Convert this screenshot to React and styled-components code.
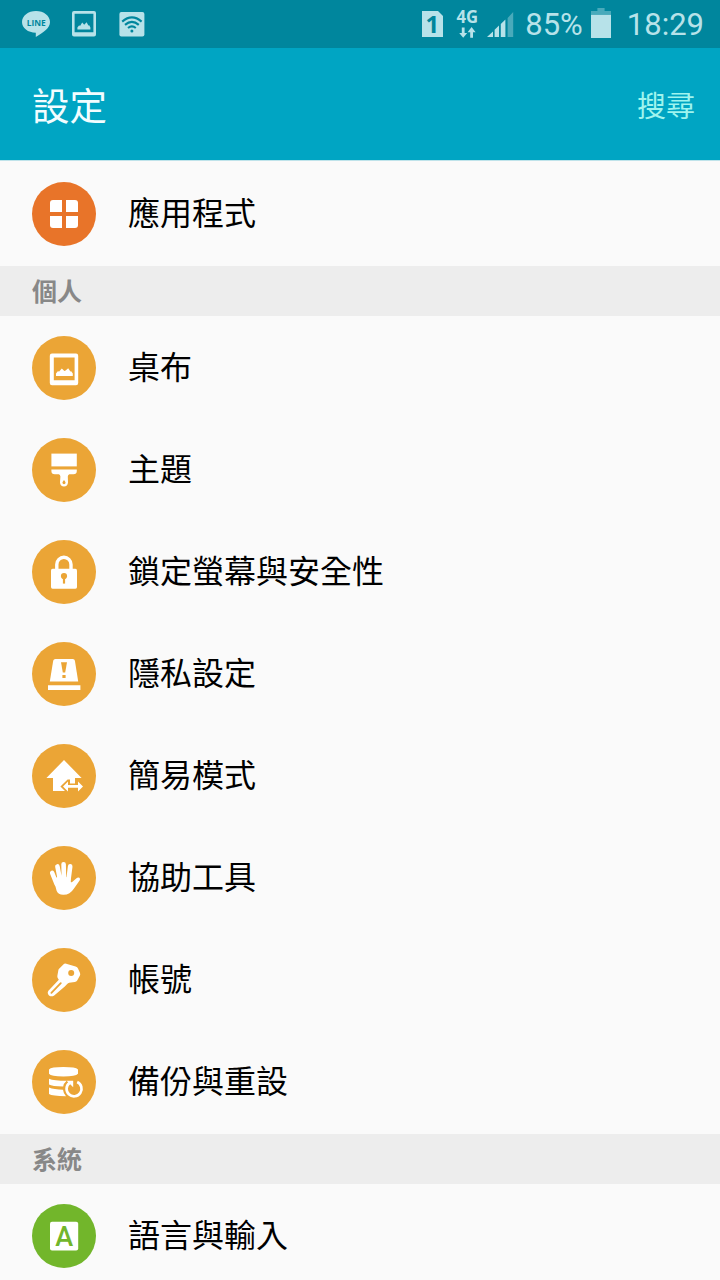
import styled, { createGlobalStyle } from "styled-components";

const TINT = "#b7e2e9";
const BAR = "#00869d";
const AMBER = "#eba536";

const AppsIcon = () => (
  <svg width="64" height="64" viewBox="0 0 64 64" fill="#fff">
    <path d="M21 18H30V30H18V21Q18 18 21 18Z" />
    <path d="M34 18H43Q46 18 46 21V30H34Z" />
    <path d="M18 34H30V46H21Q18 46 18 43Z" />
    <path d="M34 34H46V43Q46 46 43 46H34Z" />
  </svg>
);

const WallpaperIcon = () => (
  <svg width="64" height="64" viewBox="0 0 64 64" fill="#fff">
    <path
      fillRule="evenodd"
      d="M20 17.6H44Q46.2 17.6 46.2 19.8V47Q46.2 49.2 44 49.2H20Q17.8 49.2 17.8 47V19.8Q17.8 17.6 20 17.6ZM21.8 21.4V44.2H42.6V21.4Z"
    />
    <path d="M24 40V37.4L25.8 35.2L27.2 35.6L29.8 32.4L32.4 35L33.6 34.6L36.2 32.2L38.4 35.4L39.2 35.2L40.8 37.6V40Z" />
  </svg>
);

const ThemeIcon = () => (
  <svg width="64" height="64" viewBox="0 0 64 64" fill="#fff">
    <path d="M19.4 15.6H44.8V28.4H19.4Z" />
    <path
      fillRule="evenodd"
      d="M19.4 31.6H44.8V33Q44.8 36.2 41.4 36.2H37.4Q36 36.6 35.8 38.4L36 44.6Q35.6 48.6 32 48.6Q28.4 48.6 28 44.6L28.4 38.4Q28.2 36.6 26.8 36.2H22.8Q19.4 36.2 19.4 33ZM32 42Q30.6 43.4 30.4 44.8Q30.6 46.2 32 46.2Q33.4 46.2 33.6 44.8Q33.4 43.4 32 42Z"
    />
  </svg>
);

const LockIcon = () => (
  <svg width="64" height="64" viewBox="0 0 64 64" fill="#fff">
    <path d="M24.8 30V24.4A7.1 7.1 0 0 1 39 24.4V30" fill="none" stroke="#fff" strokeWidth="3.4" />
    <rect x="19" y="28.8" width="26" height="19.9" rx="1.6" />
    <circle cx="32" cy="36" r="3.1" fill={AMBER} />
    <path d="M30.9 37H33.1V43.6H30.9Z" fill={AMBER} />
  </svg>
);

const PrivacyIcon = () => (
  <svg width="64" height="64" viewBox="0 0 64 64" fill="#fff">
    <path d="M23.4 17H40.8Q42.6 17 42.9 18.8L46.2 39.4H17.8L21.2 18.8Q21.6 17 23.4 17Z" />
    <path d="M16 43.2H48.4V48H16Z" />
    <path d="M29 20.2H35L33.2 30.4H30.8Z" fill={AMBER} />
    <rect x="30.4" y="33" width="3.2" height="3" fill={AMBER} />
  </svg>
);

const EasyModeIcon = () => (
  <svg width="64" height="64" viewBox="0 0 64 64" fill="#fff">
    <path d="M32 16L49.6 34H43V39.6H38V35.4H35.6L28.4 42.4L33 47H21V34H14.4Z" />
    <path d="M31 42.4L36 37.4V41.1H46V37.4L51 42.4L46 47.4V43.7H36V47.4Z" />
  </svg>
);

const HandIcon = () => (
  <svg width="64" height="64" viewBox="0 0 64 64" fill="#fff">
    <path
      d="M20.2 27L24.6 38M25.4 20.4L28.4 36M31.6 18.2L32 36M38.2 20.4L36.2 36"
      stroke="#fff"
      strokeWidth="4.6"
      strokeLinecap="round"
    />
    <path d="M22 33L26.2 30.6L38.4 31.4L38.6 36Q39.6 36.8 40.8 35.6L44.2 32.4Q46 31 47.4 31.8Q48.6 32.8 47.6 34.6L42 42.4Q38 48.6 31.6 48.8Q26.2 49 24.6 44.8Q23 39.8 22 33Z" />
  </svg>
);

const KeyIcon = () => (
  <svg width="64" height="64" viewBox="0 0 64 64" fill="#fff">
    <path d="M31.6 16.2Q32.6 15.2 34.2 15.7L43.6 18.4Q45.4 19 46 20.6L48 25Q48.6 26.4 47.8 27.8L45.2 32.4Q44.4 33.8 42.8 34L37.2 34.8Q36 35 35.2 36L32.8 38.6L22.2 47.4Q19.6 49.2 17 47.4Q14.8 45.2 16.4 42.8L26.8 31.8L25.6 29.8Q25.2 28.8 25.4 27.6L26.4 22Q26.6 21 27.6 20.2Z" />
    <path d="M28.8 35.2L19.4 44.8" stroke={AMBER} strokeWidth="1.8" strokeLinecap="round" />
    <circle cx="39.2" cy="25" r="3" fill={AMBER} />
  </svg>
);

const BackupIcon = () => (
  <svg width="64" height="64" viewBox="0 0 64 64" fill="#fff">
    <path d="M17 19.4Q19 17 31.4 17T46 19.4V23.8Q43.8 26.4 31.4 26.4T17 23.8Z" />
    <path d="M17 28.8Q22 30.8 34.6 30.8Q31.4 33.6 31.2 36.6Q20 36.4 17 34.6Z" />
    <path d="M17 37.6Q22 39.6 31 39.8Q31.4 43.6 34 46.2Q20 46 17 44Z" />
    <path d="M45.2 32A7.5 7.5 0 1 1 37.6 32.8" fill="none" stroke="#fff" strokeWidth="2.7" />
    <path d="M34.6 30.8H41.2V37.2Z" />
  </svg>
);

const LanguageIcon = () => (
  <svg width="64" height="64" viewBox="0 0 64 64">
    <rect x="18" y="17.8" width="28.2" height="28.8" rx="2" fill="#fff" />
    <text x="32.1" y="41.7" fontSize="27" fontWeight="500" fontFamily="Roboto, sans-serif" textAnchor="middle" fill="#72b62b">
      A
    </text>
  </svg>
);

const LineIcon = () => (
  <svg width="28" height="27" viewBox="0 0 28 27">
    <path d="M14 0C21.8 0 28 4.8 28 11C28 17 21.6 21.4 13.8 26V21.8C6 21.6 0 17 0 11C0 4.8 6.2 0 14 0Z" fill={TINT} />
    <text x="14.2" y="15" fontSize="9.4" fontWeight="700" fontFamily="Open Sans, sans-serif" textAnchor="middle" textLength="19" lengthAdjust="spacingAndGlyphs" fill={BAR}>
      LINE
    </text>
  </svg>
);

const PictureIcon = () => (
  <svg width="24" height="26" viewBox="0 0 24 26" fill={TINT}>
    <path fillRule="evenodd" d="M2 0H22Q24 0 24 2V23.4Q24 25.4 22 25.4H2Q0 25.4 0 23.4V2Q0 0 2 0ZM2.6 2.8V21.2H21.4V2.8Z" />
    <path d="M5.4 18.4V16.4L7 14.4L8.2 14.8L10.2 11.4L12.2 13.8L14.6 11.2L16.4 14.4L17.2 14.2L18.4 16.4V18.4Z" />
  </svg>
);

const WifiIcon = () => (
  <svg width="26" height="25" viewBox="0 0 26 25" fill="none" stroke={BAR} strokeWidth="2.1">
    <rect x="0.4" width="25" height="24.6" rx="2" fill={TINT} stroke="none" />
    <path d="M3.2 9.6Q12.9 1.2 22.6 9.6M6 12.9Q12.9 6.9 19.8 12.9M9 16Q12.9 12.8 16.8 16" />
    <circle cx="12.9" cy="18.9" r="1.5" fill={BAR} stroke="none" />
  </svg>
);

const SimIcon = () => (
  <svg width="21" height="36" viewBox="0 0 21 36">
    <path d="M0 5H16L21 10V31H0Z" fill={TINT} />
    <text x="10.4" y="27" fontSize="24" fontWeight="700" fontFamily="Open Sans, sans-serif" textAnchor="middle" fill={BAR}>
      1
    </text>
  </svg>
);

const NetworkIcon = () => (
  <svg width="24" height="36" viewBox="0 0 24 36" fill={TINT}>
    <text x="0.6" y="20.4" fontSize="17" fontWeight="700" fontFamily="Open Sans, sans-serif" textLength="21.6" lengthAdjust="spacingAndGlyphs">
      4G
    </text>
    <path d="M5.8 24.4H8.6V30H11.2L7.2 34.8L3.2 30H5.8Z" />
    <path d="M14.2 34.8H17V29.2H19.6L15.6 24L11.6 29.2H14.2Z" />
  </svg>
);

const SignalIcon = () => (
  <svg width="27" height="26" viewBox="0 0 27 26" fill={TINT}>
    <path d="M0 25L6 19.4V25Z" />
    <path d="M7.6 17.8L12 13.6V25H7.6Z" />
    <path d="M13.8 12L18.4 7.6V25H13.8Z" />
    <path d="M20.6 6L26.2 0V25H20.6Z" opacity="0.4" />
  </svg>
);

const BatteryIcon = () => (
  <svg width="20" height="30" viewBox="0 0 20 30" fill={TINT}>
    <path d="M6.4 0H13.6V3H20V6.8H0V3H6.4Z" opacity="0.4" />
    <path d="M0 6.8H20V30H0Z" />
  </svg>
);

const personal = [
  { label: "桌布", Icon: WallpaperIcon },
  { label: "主題", Icon: ThemeIcon },
  { label: "鎖定螢幕與安全性", Icon: LockIcon },
  { label: "隱私設定", Icon: PrivacyIcon },
  { label: "簡易模式", Icon: EasyModeIcon },
  { label: "協助工具", Icon: HandIcon },
  { label: "帳號", Icon: KeyIcon },
  { label: "備份與重設", Icon: BackupIcon },
];

const SettingItem = ({ label, Icon, color = AMBER }) => (
  <Row>
    <Badge $color={color}>
      <Icon />
    </Badge>
    <Label>{label}</Label>
  </Row>
);

const App = () => {
  return (
    <>
      <GlobalStyle />
      <Screen>
        <StatusBar>
          <Notifications>
            <LineIcon />
            <PictureIcon />
            <WifiIcon />
          </Notifications>
          <Indicators>
            <SimIcon />
            <NetworkIcon />
            <SignalIcon />
            <StatusText $left={11} $right={8}>85%</StatusText>
            <BatteryIcon />
            <StatusText $left={16} $right={0}>18:29</StatusText>
          </Indicators>
        </StatusBar>

        <Header>
          <Title>設定</Title>
          <Search>搜尋</Search>
        </Header>

        <List $top={2}>
          <SettingItem label="應用程式" Icon={AppsIcon} color="#e87429" />
        </List>

        <SectionTitle>個人</SectionTitle>
        <List>
          {personal.map((item) => (
            <SettingItem key={item.label} {...item} />
          ))}
        </List>

        <SectionTitle>系統</SectionTitle>
        <List>
          <SettingItem label="語言與輸入" Icon={LanguageIcon} color="#72b62b" />
        </List>
      </Screen>
    </>
  );
};

export default App;

const GlobalStyle = createGlobalStyle`
  * {
    box-sizing: border-box;
  }

  body {
    margin: 0;
    background: #fafafa;
    font-family: "Noto Sans CJK TC", sans-serif;
  }
`;

const Screen = styled.div`
  width: 720px;
  height: 1280px;
  overflow: hidden;
  background: #fafafa;
`;

const StatusBar = styled.div`
  height: 48px;
  display: flex;
  justify-content: space-between;
  background: ${BAR};
  padding: 0 16px 0 22px;
`;

const Notifications = styled.div`
  display: flex;
  gap: 22px;
  padding-top: 11px;

  svg:last-child {
    margin: 1px 0 0 1px;
  }
`;

const Indicators = styled.div`
  display: flex;
  align-items: flex-end;
  padding-bottom: 10px;

  svg {
    flex: none;
  }

  svg:nth-child(1) {
    margin: 0 13px -4px 0;
  }

  svg:nth-child(2) {
    margin: 0 7px -1px 0;
  }
`;

const StatusText = styled.span`
  font-family: Roboto, sans-serif;
  font-size: 31px;
  font-weight: 400;
  line-height: 26px;
  color: ${TINT};
  margin-left: ${({ $left }) => $left}px;
  margin-right: ${({ $right }) => $right}px;
`;

const Header = styled.header`
  height: 113px;
  display: flex;
  align-items: center;
  justify-content: space-between;
  padding: 0 25px 0 32px;
  background: #00a5c3;
  border-bottom: 1px solid #bfe3ea;
`;

const Title = styled.h1`
  margin: 0;
  font-size: 37.5px;
  font-weight: 400;
  line-height: 56px;
  color: #f2fdff;
`;

const Search = styled.span`
  font-size: 29px;
  line-height: 40px;
  color: #9ff4ee;
`;

const List = styled.div`
  padding: ${({ $top = 1 }) => $top}px 0 1px;
`;

const Row = styled.div`
  height: 102px;
  display: flex;
  align-items: center;
  gap: 32px;
  padding: 0 32px;
`;

const Badge = styled.div`
  width: 64px;
  height: 64px;
  border-radius: 50%;
  background: ${({ $color }) => $color};
`;

const Label = styled.span`
  padding-bottom: 6px;
  font-size: 32px;
  line-height: 48px;
  color: #000;
`;

const SectionTitle = styled.h2`
  height: 50px;
  margin: 0;
  padding: 0 32px;
  font-size: 25px;
  font-weight: 700;
  line-height: 49px;
  color: #888;
  background: #ededed;
`;
